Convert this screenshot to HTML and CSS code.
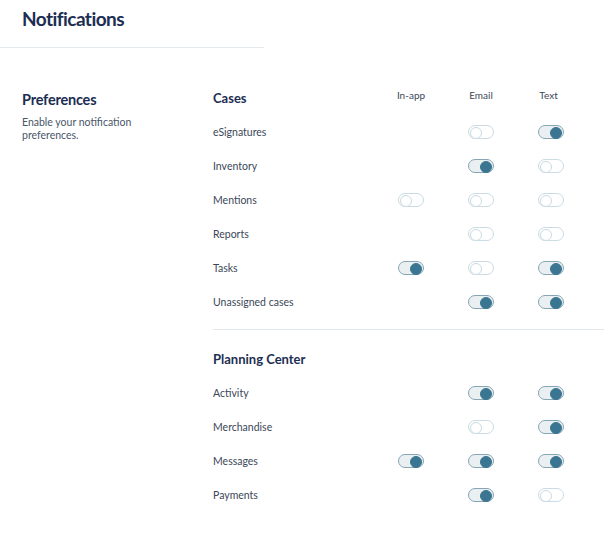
FILE: index.html
```html
<!DOCTYPE html>
<html lang="en">
<head>
<meta charset="utf-8">
<title>Notifications</title>
<link rel="stylesheet" href="styles.css">
</head>
<body>
<header class="page-head">
  <h1 class="page-title">Notifications</h1>
</header>
<main class="prefs">
  <aside class="prefs-intro">
    <h2 class="prefs-title">Preferences</h2>
    <p class="prefs-desc">Enable your notification preferences.</p>
  </aside>
  <section class="prefs-body">
    <div class="group">
      <div class="row head">
        <span class="group-name">Cases</span>
        <span class="col-name">In-app</span>
        <span class="col-name">Email</span>
        <span class="col-name col-text">Text</span>
      </div>
      <div class="row"><span class="label">eSignatures</span><span class="cell"></span><span class="cell"><span class="toggle"></span></span><span class="cell"><span class="toggle on"></span></span></div>
      <div class="row"><span class="label">Inventory</span><span class="cell"></span><span class="cell"><span class="toggle on"></span></span><span class="cell"><span class="toggle"></span></span></div>
      <div class="row"><span class="label">Mentions</span><span class="cell"><span class="toggle"></span></span><span class="cell"><span class="toggle"></span></span><span class="cell"><span class="toggle"></span></span></div>
      <div class="row"><span class="label">Reports</span><span class="cell"></span><span class="cell"><span class="toggle"></span></span><span class="cell"><span class="toggle"></span></span></div>
      <div class="row"><span class="label">Tasks</span><span class="cell"><span class="toggle on"></span></span><span class="cell"><span class="toggle"></span></span><span class="cell"><span class="toggle on"></span></span></div>
      <div class="row"><span class="label">Unassigned cases</span><span class="cell"></span><span class="cell"><span class="toggle on"></span></span><span class="cell"><span class="toggle on"></span></span></div>
    </div>
    <div class="group second">
      <div class="row head">
        <span class="group-name">Planning Center</span>
      </div>
      <div class="row"><span class="label">Activity</span><span class="cell"></span><span class="cell"><span class="toggle on"></span></span><span class="cell"><span class="toggle on"></span></span></div>
      <div class="row"><span class="label">Merchandise</span><span class="cell"></span><span class="cell"><span class="toggle"></span></span><span class="cell"><span class="toggle on"></span></span></div>
      <div class="row"><span class="label">Messages</span><span class="cell"><span class="toggle on"></span></span><span class="cell"><span class="toggle on"></span></span><span class="cell"><span class="toggle on"></span></span></div>
      <div class="row"><span class="label">Payments</span><span class="cell"></span><span class="cell"><span class="toggle on"></span></span><span class="cell"><span class="toggle"></span></span></div>
    </div>
  </section>
</main>
</body>
</html>
```

FILE: styles.css
```css
* { box-sizing: border-box; }
body {
  margin: 0;
  background: #ffffff;
  font-family: Lato, "Open Sans", sans-serif;
  color: #3b4758;
}
.page-head {
  width: 264px;
  height: 48px;
  padding: 6px 0 0 22px;
  border-bottom: 1px solid #e4e9ee;
}
.page-title {
  margin: 0;
  font-size: 19px;
  line-height: 26px;
  font-weight: 700;
  color: #1c2e52;
  letter-spacing: -0.55px;
}
.prefs {
  display: flex;
  margin-top: 32px;
}
.prefs-intro {
  width: 213px;
  padding: 10px 20px 0 22px;
}
.prefs-title {
  margin: 0;
  font-size: 14.5px;
  line-height: 20px;
  font-weight: 700;
  color: #1c2e52;
  letter-spacing: -0.2px;
}
.prefs-desc {
  margin: 6px 0 0;
  font-size: 10.5px;
  line-height: 13px;
  color: #4a5668;
  width: 150px;
}
.prefs-body {
  width: 391px;
}
.group.second {
  margin-top: 10px;
  padding-top: 11px;
  border-top: 1px solid #e3e8ec;
}
.row {
  display: grid;
  grid-template-columns: 163px 70px 70px 70px;
  align-items: center;
  height: 34px;
}
.row.head { height: 35px; }
.group-name {
  font-size: 13px;
  font-weight: 700;
  color: #1c2e52;
  white-space: nowrap;
}
.col-name {
  font-size: 10px;
  text-align: center;
  color: #3b4758;
  margin-top: -5px;
}
.col-text { padding-right: 5px; }
.label {
  font-size: 10.5px;
  color: #3b4758;
  margin-top: -1px;
}
.cell {
  display: flex;
  justify-content: center;
}
.toggle {
  position: relative;
  display: block;
  width: 26px;
  height: 14px;
  border-radius: 7px;
  border: 1px solid #cadbe3;
  background: #ffffff;
}
.toggle::after {
  content: "";
  position: absolute;
  top: 1px;
  left: 1px;
  width: 10px;
  height: 10px;
  border-radius: 50%;
  border: 1px solid #cadbe3;
  background: #ffffff;
}
.toggle.on {
  border-color: #86a6b6;
  background: #eaeff2;
}
.toggle.on::after {
  left: auto;
  right: 1px;
  border-color: #3a7591;
  background: #3a7591;
}
```
